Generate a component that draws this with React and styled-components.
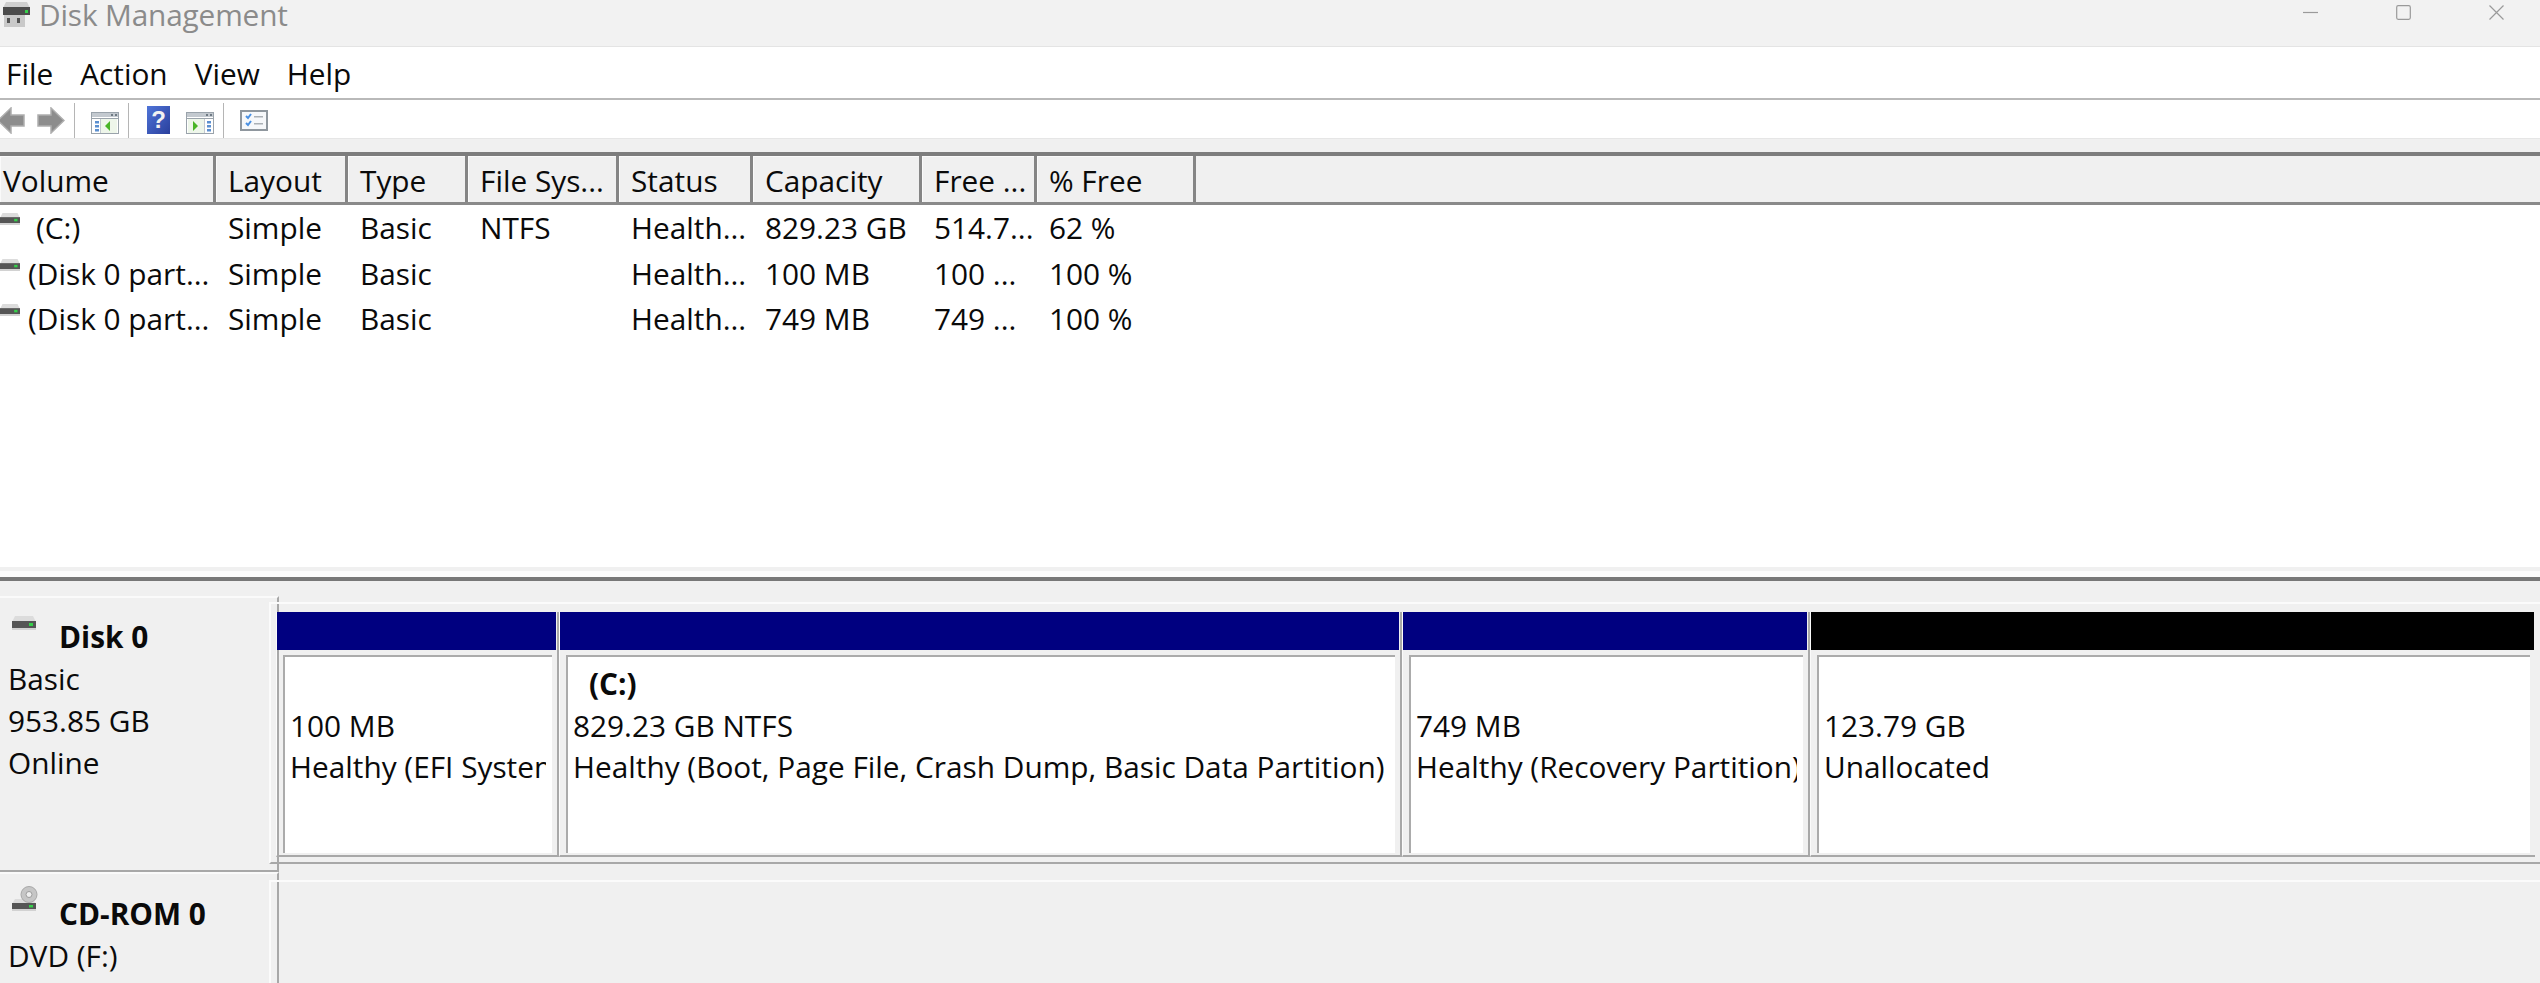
import React from 'react';
import styled, { createGlobalStyle } from 'styled-components';

const GlobalStyle = createGlobalStyle`
  html, body {
    margin: 0;
    height: 983px;
    overflow: hidden;
    background: #f0f0f0;
  }
  body {
    font-family: "Open Sans", "Noto Sans", sans-serif;
    font-size: 29.8px;
    color: #0a0a0a;
  }
`;

const Window = styled.div`
  display: flex;
  flex-direction: column;
  width: 2540px;
  height: 983px;
`;

const TitleBar = styled.div`
  display: flex;
  align-items: flex-start;
  height: 46px;
  background: #f2f2f2;
  border-bottom: 1px solid #e4e4e4;
  padding-left: 2px;
`;

const TitleText = styled.div`
  margin-left: 8px;
  line-height: 30px;
  letter-spacing: -0.15px;
  color: #8b8b8b;
`;

const WindowControls = styled.div`
  display: flex;
  margin-left: auto;
  padding-top: 5px;
  padding-right: 36px;
  gap: 78px;
`;

const MenuBar = styled.div`
  display: flex;
  align-items: center;
  gap: 27px;
  height: 51px;
  padding-left: 6px;
  background: #fff;
  border-bottom: 2px solid #b9b9b9;
`;

const MenuItem = styled.span`
  line-height: 51px;
  margin-top: 2px;
`;

const Toolbar = styled.div`
  display: flex;
  align-items: flex-end;
  height: 39px;
  padding-bottom: 4px;
  box-sizing: border-box;
  background: #fff;
  border-bottom: 1px solid #e6e6e6;
`;

const ToolSep = styled.div`
  width: 1px;
  height: 35px;
  margin-bottom: -4px;
  margin-left: ${(props) => props.$gap}px;
  background: #b5b5b5;
`;

const ToolIcon = styled.svg`
  display: block;
  flex: none;
  margin-left: ${(props) => props.$gap || 0}px;
  margin-bottom: ${(props) => props.$lift || 0}px;
`;

const ToolGap = styled.div`
  height: 13px;
  background: #f0f0f0;
`;

const ColumnHeader = styled.div`
  display: grid;
  grid-template-columns: 216px 132px 120px 151px 134px 169px 115px 159px;
  height: 53px;
  box-sizing: border-box;
  background: #f0f0f0;
  border-top: 4px solid #7d7d7d;
  border-bottom: 3px solid #8a8a8a;
`;

const HeaderCell = styled.div`
  padding-left: 12px;
  line-height: 50px;
  white-space: nowrap;
  overflow: hidden;
  border-right: 3px solid #858585;
  box-shadow: inset 1px 1px 0 #fafafa;

  &:first-child {
    padding-left: 3px;
  }
`;

const VolumeList = styled.div`
  height: 362px;
  box-sizing: border-box;
  background: #fff;
`;

const VolumeRow = styled.div`
  display: grid;
  grid-template-columns: 216px 132px 120px 151px 134px 169px 115px 159px;
  height: 45.6px;
`;

const VolumeCell = styled.div`
  padding-left: 12px;
  line-height: 46px;
  white-space: nowrap;
  overflow: hidden;

  &:first-child {
    display: flex;
    padding-left: 0;
  }
`;

const VolumeName = styled.span`
  margin-left: ${(props) => props.$indent}px;
`;

const Splitter = styled.div`
  height: 14px;
  box-sizing: border-box;
  background: #fbfbfb;
  border-top: 4px solid #f0f0f0;
  border-bottom: 4px solid #777;
`;

const DiskPane = styled.div`
  flex: 1;
  display: flex;
  flex-direction: column;
  padding-top: 15px;
  background: #f0f0f0;
`;

const DiskRow = styled.div`
  display: flex;
  flex: ${(props) => (props.$grow ? 1 : 'none')};
  height: ${(props) => (props.$grow ? 'auto' : '276px')};
  min-height: 0;
`;

const DiskInfo = styled.div`
  flex: none;
  width: 279px;
  box-sizing: border-box;
  padding-top: ${(props) => props.$top}px;
  padding-left: 8px;
  line-height: 42px;
  border-right: 2px solid #a8a8a8;
  border-top: 2px solid #fafafa;
  border-bottom: ${(props) => (props.$grow ? 'none' : '2px solid #a8a8a8')};
`;

const DiskHead = styled.div`
  display: flex;
  align-items: flex-start;
  padding-left: 4px;
`;

const DiskName = styled.strong`
  margin-left: ${(props) => props.$indent}px;
  font-weight: 700;
`;

const DiskIconBox = styled.svg`
  display: block;
  flex: none;
  margin-top: ${(props) => props.$top || 0}px;
  margin-bottom: ${(props) => props.$bottom || 0}px;
`;

const DiskFrame = styled.div`
  flex: 1;
  min-width: 0;
  position: relative;
  margin: 8px 0 0 -10px;
  box-sizing: border-box;
  border-top: 2px solid #fbfbfb;
  border-left: 2px solid #fbfbfb;
  padding-left: 5px;
`;

const VolumeFrame = styled(DiskFrame)`
  margin-top: 6px;
  margin-bottom: 8px;
  border-bottom: 2px solid #a8a8a8;
`;

const PartitionRow = styled.div`
  display: flex;
  height: 100%;
  padding: 8px 5px 5px 0;
  box-sizing: border-box;
`;

const Partition = styled.div`
  display: flex;
  flex-direction: column;
  box-sizing: border-box;
  min-width: 0;
  flex: ${(props) => (props.$width ? `0 0 ${props.$width}px` : 1)};
  border-left: 1px solid #fbfbfb;
  border-right: ${(props) => (props.$width ? '2px solid #a8a8a8' : 'none')};
  border-bottom: 2px solid #a8a8a8;
`;

const PartitionBar = styled.div`
  height: 38px;
  flex: none;
  margin-right: 1px;
  background: ${(props) => props.$color};
`;

const PartitionBody = styled.div`
  flex: none;
  height: 198px;
  margin: 5px 5px 0 6px;
  padding: 6px 6px 0 5px;
  box-sizing: border-box;
  background: #fff;
  border-top: 2px solid #ababab;
  border-left: 2px solid #ababab;
  line-height: 41.5px;
  white-space: nowrap;
  overflow: hidden;
`;

const PartitionLabel = styled.div`
  height: 41.5px;
  padding-left: 16px;
  font-weight: 700;
`;

const Clip = styled.div`
  overflow: hidden;
`;

const AppIcon = () => (
  <svg width="29" height="27" viewBox="0 0 29 27" style={{ marginTop: 1, flex: 'none' }}>
    <path d="M4 1h21l3 6v7H1V7z" fill="#cfcfcf" />
    <rect x="1" y="6" width="27" height="8" fill="#4c4c4c" />
    <rect x="23" y="9" width="3" height="3" fill="#35d04a" />
    <rect x="2" y="14" width="21" height="12" fill="#c9c9c9" />
    <rect x="5" y="17" width="3" height="5" fill="#555" />
    <rect x="15" y="17" width="3" height="5" fill="#555" />
  </svg>
);

const ArrowIcon = ({ flip, gap }) => (
  <ToolIcon width="28" height="27" viewBox="0 0 28 27" $gap={gap}>
    <polygon
      points={flip ? '1,8 14,8 14,1 27,13.5 14,26 14,19 1,19' : '27,8 14,8 14,1 1,13.5 14,26 14,19 27,19'}
      fill="#8d8d8d"
      stroke="#aeaeae"
      strokeWidth="1.5"
    />
  </ToolIcon>
);

const PaneIcon = ({ right, gap }) => (
  <ToolIcon width="28" height="22" viewBox="0 0 28 22" $gap={gap}>
    <rect x="0.5" y="0.5" width="27" height="21" fill="#fff" stroke="#9aa3ab" />
    <rect x="1" y="1" width="26" height="4" fill="#c3c9cf" />
    <rect x="20" y="2" width="2" height="2" fill="#6f7a84" />
    <rect x="24" y="2" width="2" height="2" fill="#6f7a84" />
    <rect x="1" y="6" width="26" height="1" fill="#9aa3ab" />
    <rect x={right ? 2 : 10} y="7" width="16" height="14" fill="#eef6ea" />
    <rect x={right ? 18 : 9} y="7" width="1" height="14" fill="#c3c9cf" />
    {[9, 13, 17].map((y) => (
      <rect key={y} x={right ? 21 : 4} y={y} width="4" height="2.5" fill="#5b8fd0" />
    ))}
    <polygon points={right ? '7,9 12,14 7,19' : '19,9 14,14 19,19'} fill="#49b527" />
  </ToolIcon>
);

const HelpIcon = ({ gap }) => (
  <ToolIcon width="23" height="28" viewBox="0 0 23 28" $gap={gap}>
    <defs>
      <linearGradient id="helpFill" x1="0" y1="0" x2="1" y2="1">
        <stop offset="0" stopColor="#4f74d8" />
        <stop offset="1" stopColor="#2a3f9c" />
      </linearGradient>
    </defs>
    <rect width="23" height="28" fill="url(#helpFill)" />
    <text x="11.5" y="22" textAnchor="middle" fontFamily="Liberation Sans" fontWeight="700" fontSize="24" fill="#f2f2f2">?</text>
  </ToolIcon>
);

const ChecklistIcon = ({ gap }) => (
  <ToolIcon width="28" height="21" viewBox="0 0 28 21" $gap={gap} $lift={3}>
    <rect x="1" y="1" width="26" height="19" fill="#f6f8fa" stroke="#8f979e" strokeWidth="2" />
    <path d="M6 6l2 2 3-4M6 13l2 2 3-4" fill="none" stroke="#4a90e2" strokeWidth="2" />
    <rect x="14" y="6" width="9" height="1.5" fill="#aab0b5" />
    <rect x="14" y="13" width="9" height="1.5" fill="#aab0b5" />
  </ToolIcon>
);

const DriveIcon = ({ width = 20, top, bottom }) => (
  <DiskIconBox width={width} height={width * 0.6} viewBox="0 0 24 14.4" $top={top} $bottom={bottom} preserveAspectRatio="none">
    <path d="M3 0h18l3 6H0z" fill="#dcdcdc" />
    <rect y="5" width="24" height="7" fill="#555" />
    <rect y="12" width="24" height="2.4" fill="#d2d2d2" />
    <rect x="17" y="7" width="4" height="3" fill="#35d04a" />
  </DiskIconBox>
);

const CdIcon = ({ top }) => (
  <DiskIconBox width="28" height="26" viewBox="0 0 28 26" $top={top}>
    <path d="M3 13h18l3 5H0z" fill="#dcdcdc" />
    <rect y="17" width="24" height="6" fill="#555" />
    <rect y="23" width="24" height="2" fill="#d2d2d2" />
    <rect x="17" y="19" width="4" height="2.5" fill="#35d04a" />
    <circle cx="17" cy="8.5" r="8" fill="#c6c6c6" stroke="#a8a8a8" />
    <circle cx="17" cy="8.5" r="3" fill="#efefef" stroke="#9c9c9c" />
  </DiskIconBox>
);

const columns = ['Volume', 'Layout', 'Type', 'File Sys...', 'Status', 'Capacity', 'Free ...', '% Free'];

const volumes = [
  { name: '(C:)', indent: 16, cells: ['Simple', 'Basic', 'NTFS', 'Health...', '829.23 GB', '514.7...', '62 %'] },
  { name: '(Disk 0 part...', indent: 8, cells: ['Simple', 'Basic', '', 'Health...', '100 MB', '100 ...', '100 %'] },
  { name: '(Disk 0 part...', indent: 8, cells: ['Simple', 'Basic', '', 'Health...', '749 MB', '749 ...', '100 %'] },
];

const partitions = [
  { width: 283, color: '#000080', size: '100 MB', status: 'Healthy (EFI System Partition)' },
  { width: 843, color: '#000080', label: '(C:)', size: '829.23 GB NTFS', status: 'Healthy (Boot, Page File, Crash Dump, Basic Data Partition)' },
  { width: 408, color: '#000080', size: '749 MB', status: 'Healthy (Recovery Partition)' },
  { color: '#000', size: '123.79 GB', status: 'Unallocated' },
];

export default function App() {
  return (
    <Window>
      <GlobalStyle />
      <TitleBar>
        <AppIcon />
        <TitleText>Disk Management</TitleText>
        <WindowControls>
          <svg width="15" height="15" viewBox="0 0 15 15"><path d="M0 7.5h15" stroke="#9a9a9a" strokeWidth="1.2" /></svg>
          <svg width="15" height="15" viewBox="0 0 15 15"><rect x="0.7" y="0.7" width="13.6" height="13.6" rx="1.5" fill="none" stroke="#9a9a9a" strokeWidth="1.2" /></svg>
          <svg width="15" height="15" viewBox="0 0 15 15"><path d="M0.5 0.5l14 14M14.5 0.5l-14 14" stroke="#9a9a9a" strokeWidth="1.2" /></svg>
        </WindowControls>
      </TitleBar>
      <MenuBar>
        <MenuItem>File</MenuItem>
        <MenuItem>Action</MenuItem>
        <MenuItem>View</MenuItem>
        <MenuItem>Help</MenuItem>
      </MenuBar>
      <Toolbar>
        <ArrowIcon gap={-3} />
        <ArrowIcon flip gap={12} />
        <ToolSep $gap={9} />
        <PaneIcon gap={16} />
        <ToolSep $gap={9} />
        <HelpIcon gap={18} />
        <PaneIcon right gap={16} />
        <ToolSep $gap={9} />
        <ChecklistIcon gap={16} />
      </Toolbar>
      <ToolGap />
      <ColumnHeader>
        {columns.map((col) => (
          <HeaderCell key={col}>{col}</HeaderCell>
        ))}
      </ColumnHeader>
      <VolumeList>
        {volumes.map((vol, i) => (
          <VolumeRow key={i}>
            <VolumeCell>
              <DriveIcon top={8} />
              <VolumeName $indent={vol.indent}>{vol.name}</VolumeName>
            </VolumeCell>
            {vol.cells.map((cell, j) => (
              <VolumeCell key={j}>{cell}</VolumeCell>
            ))}
          </VolumeRow>
        ))}
      </VolumeList>
      <Splitter />
      <DiskPane>
        <DiskRow>
          <DiskInfo $top={18}>
            <DiskHead>
              <DriveIcon width={24} />
              <DiskName $indent={23}>Disk 0</DiskName>
            </DiskHead>
            <div>Basic</div>
            <div>953.85 GB</div>
            <div>Online</div>
          </DiskInfo>
          <VolumeFrame>
            <PartitionRow>
              {partitions.map((part) => (
                <Partition key={part.size} $width={part.width}>
                  <PartitionBar $color={part.color} />
                  <PartitionBody>
                    <PartitionLabel>{part.label}</PartitionLabel>
                    <Clip>{part.size}</Clip>
                    <Clip>{part.status}</Clip>
                  </PartitionBody>
                </Partition>
              ))}
            </PartitionRow>
          </VolumeFrame>
        </DiskRow>
        <DiskRow $grow>
          <DiskInfo $top={19} $grow>
            <DiskHead>
              <CdIcon top={-7} />
              <DiskName $indent={19}>CD-ROM 0</DiskName>
            </DiskHead>
            <div>DVD (F:)</div>
          </DiskInfo>
          <DiskFrame />
        </DiskRow>
      </DiskPane>
    </Window>
  );
}
